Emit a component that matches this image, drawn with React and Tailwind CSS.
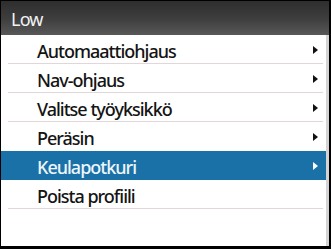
const ITEMS = [
  { label: 'Automaattiohjaus', arrow: true },
  { label: 'Nav-ohjaus', arrow: true },
  { label: 'Valitse työyksikkö', arrow: true },
  { label: 'Peräsin', arrow: true },
  { label: 'Keulapotkuri', arrow: true, active: true },
  { label: 'Poista profiili', arrow: false },
]

function Arrow({ white }) {
  return (
    <svg width="5" height="8" viewBox="0 0 5 8" className="block">
      <path d="M0 0 L5 4 L0 8 Z" fill={white ? '#ffffff' : '#111111'} />
    </svg>
  )
}

export default function App() {
  return (
    <div
      className="w-[331px] h-[249px] bg-black flex flex-col pl-[1px] pt-[1px] pr-[2px] pb-[3px]"
      style={{ fontFamily: '"Noto Sans", "Open Sans", sans-serif' }}
    >
      {/* title bar */}
      <div className="h-[34px] shrink-0 flex items-center pl-[10px] bg-gradient-to-b from-[#2e2e2e] via-[#3d3d3d] to-[#585858]">
        <span className="text-[18px] leading-none text-[#f2f2f2] tracking-[-0.8px] pt-[1px]">Low</span>
      </div>

      {/* menu */}
      <div className="flex-1 bg-white flex border-r-[3px] border-[#d4d4d4]">
        <div className="flex-1 flex flex-col">
          {ITEMS.map((item, i) => (
            <div
              key={i}
              className={`h-[29px] flex items-center relative ${item.active ? 'bg-[#1a71a7]' : ''}`}
            >
              <span
                className={`pl-[36px] pt-[2px] text-[18px] font-medium leading-none tracking-[-1px] ${item.active ? 'text-[#eef6fb]' : 'text-[#141414]'}`}
              >
                {item.label}
              </span>
              {item.arrow && (
                <div className="absolute right-[8px] top-[11px]">
                  <Arrow white={item.active} />
                </div>
              )}
              {!item.active && !ITEMS[i + 1]?.active && (
                <div className="absolute bottom-0 left-[7px] right-[3px] h-[1px] bg-[#e3d6d8]" />
              )}
            </div>
          ))}
        </div>
      </div>
    </div>
  )
}
